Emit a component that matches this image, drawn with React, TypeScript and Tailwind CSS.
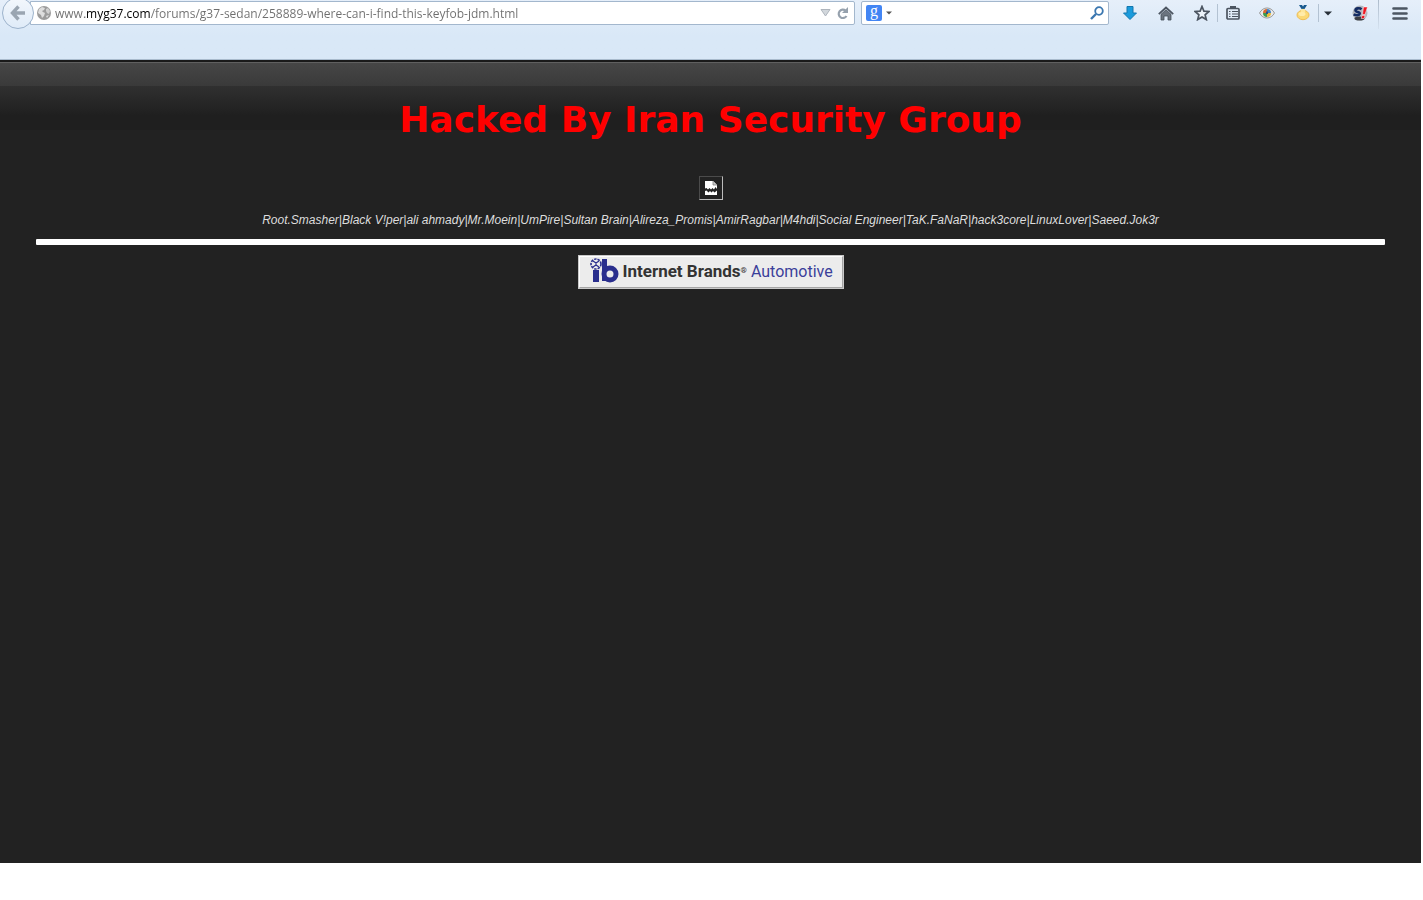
import type { ReactNode } from "react";

const members = [
  "Root.Smasher",
  "Black V!per",
  "ali ahmady",
  "Mr.Moein",
  "UmPire",
  "Sultan Brain",
  "Alireza_Promis",
  "AmirRagbar",
  "M4hdi",
  "Social Engineer",
  "TaK.FaNaR",
  "hack3core",
  "LinuxLover",
  "Saeed.Jok3r",
];

function ToolButton({ label, children }: { label: string; children: ReactNode }) {
  return (
    <button type="button" aria-label={label} className="flex h-6 w-[30px] items-center justify-center">
      {children}
    </button>
  );
}

function Separator() {
  return <span className="h-[18px] w-px bg-[#b3c2d2]" aria-hidden="true" />;
}

function BackButton() {
  return (
    <button
      type="button"
      aria-label="Back"
      className="relative z-10 -mr-1 flex size-8 shrink-0 items-center justify-center rounded-full border border-[#9db3cc] bg-gradient-to-b from-[#f3f7fc] to-[#dfebf8]"
    >
      <svg width="16" height="16" viewBox="0 0 16 16" fill="none" stroke="#9aa5b1" strokeWidth="3.400">
        <path d="M8.5 1.5 2.5 8l6 6.500M3 8h12" />
      </svg>
    </button>
  );
}

function AddressBar() {
  return (
    <div className="flex h-6 min-w-0 flex-1 items-center rounded-r-[2px] border border-[#a3b7cd] bg-white pl-1.5">
      <svg width="14" height="14" viewBox="0 0 14 14" className="shrink-0" aria-hidden="true">
        <circle cx="7" cy="7" r="7" fill="#9c9c9c" />
        <path d="M2 3 5 1l3 1-1 2-2 1 1 1 2 1-1 3-2 2-1-3-3-2z" fill="#dedede" />
        <path d="m9 3 2-1 2 3-1 3-2-1-1-2z" fill="#d0d0d0" />
        <path d="m9 10 3-1-2 3z" fill="#ddd" />
      </svg>
      {/* The host part of the address is drawn darker than the rest */}
      <input
        type="text"
        aria-label="Address"
        defaultValue="www.myg37.com/forums/g37-sedan/258889-where-can-i-find-this-keyfob-jdm.html"
        className="ml-1 h-5 min-w-0 flex-1 bg-[linear-gradient(90deg,#6e6e6e_30px,#000_30px,#000_95px,#6e6e6e_95px)] bg-clip-text font-['Open_Sans','Noto_Sans',sans-serif] text-xs text-transparent caret-black outline-none"
      />
      <button type="button" aria-label="Show history" className="flex w-[18px] justify-center">
        <svg width="11" height="8" viewBox="0 0 11 8">
          <path d="M1 .5h9L5.500 7z" fill="#d2d7dc" stroke="#aeb5bd" />
        </svg>
      </button>
      <button type="button" aria-label="Reload" className="flex w-5 justify-center pr-1">
        <svg width="13" height="13" viewBox="0 0 13 13">
          <path d="M9.500 3.500A4.200 4.200 0 1 0 10.500 9" fill="none" stroke="#96a1ad" strokeWidth="2.200" />
          <path d="M12 0v6H6z" fill="#96a1ad" />
        </svg>
      </button>
    </div>
  );
}

function SearchBar() {
  return (
    <div className="ml-1.5 flex h-6 w-[248px] shrink-0 items-center rounded-[2px] border border-[#a3b7cd] bg-white px-1">
      <button type="button" aria-label="Choose search engine" className="flex items-center gap-1">
        <span className="flex size-4 items-center justify-center rounded-[2px] bg-[#4285f4] pb-1 font-['Liberation_Serif',serif] text-base leading-none text-white">
          g
        </span>
        <svg width="6" height="4" viewBox="0 0 6 4">
          <path d="M0 .5h6L3 3.500z" fill="#555" />
        </svg>
      </button>
      <input
        type="text"
        aria-label="Search"
        className="ml-1 h-5 min-w-0 flex-1 font-['Open_Sans',sans-serif] text-xs outline-none"
      />
      <button type="button" aria-label="Go">
        <svg width="14" height="14" viewBox="0 0 14 14" fill="none" stroke="#3b77b0">
          <circle cx="9" cy="5" r="3.800" strokeWidth="1.800" />
          <path d="M6 8 1 13" strokeWidth="2.400" />
        </svg>
      </button>
    </div>
  );
}

function BrowserActions() {
  return (
    <div className="ml-1.5 flex shrink-0 items-center">
      <div className="flex items-center gap-1.5">
        <ToolButton label="Downloads">
          <svg width="14" height="14" viewBox="0 0 14 14">
            <path d="M4 .5h6V7h3.500L7 13.500.5 7H4z" fill="#1b9bdc" stroke="#1377ae" />
          </svg>
        </ToolButton>
        <ToolButton label="Home">
          <svg width="16" height="15" viewBox="0 0 16 15">
            <path d="M.8 8.200 8 1.500l7.200 6.700" fill="none" stroke="#4c5561" strokeWidth="1.800" />
            <path d="M3 8.300 8 3.800l5 4.500V14h-3v-4H6v4H3z" fill="#6b747f" stroke="#454e59" strokeWidth=".8" />
          </svg>
        </ToolButton>
        <ToolButton label="Bookmark this page">
          <svg width="16" height="16" viewBox="0 0 16 16">
            <path
              d="m8 1.500 1.900 4.600 5 .4-3.800 3.300 1.200 4.800L8 12l-4.300 2.600 1.200-4.800L1.100 6.500l5-.4z"
              fill="#edf3fa"
              stroke="#4c5561"
              strokeWidth="1.700"
            />
          </svg>
        </ToolButton>
      </div>
      <Separator />
      <ToolButton label="Bookmarks">
        <svg width="14" height="14" viewBox="0 0 14 14" fill="none" stroke="#4c5561">
          <rect x="1" y="2.500" width="12" height="10.500" rx="1" strokeWidth="1.700" />
          <path d="M4 1.500h6" strokeWidth="3" />
          <path d="M3 5.500h1.500M6 5.500h6M3 8h1.500M6 8h6M3 10.500h1.500M6 10.500h6" />
        </svg>
      </ToolButton>
      <div className="ml-1 flex items-center gap-1.5">
        <ToolButton label="View">
          <svg width="16" height="12" viewBox="0 0 16 12">
            <path d="M.5 6C4-.7 12-.7 15.500 6 12 12.700 4 12.700.5 6z" fill="#e9e9e9" stroke="#9a9a9a" />
            <path d="M8 2a4 4 0 0 0-4 4h4z" fill="#d96b32" />
            <path d="M8 2a4 4 0 0 1 4 4H8z" fill="#3f83c8" />
            <path d="M4 6a4 4 0 0 0 4 4V6z" fill="#3f9a4c" />
            <path d="M12 6a4 4 0 0 1-4 4V6z" fill="#eab936" />
            <path d="M7 4.500h2v2.500H7z" fill="#2d4f86" />
          </svg>
        </ToolButton>
        <ToolButton label="Awards">
          <svg width="14" height="16" viewBox="0 0 14 16">
            <path d="M3 0h3l1 1.500L8 0h3L8.500 4h-3z" fill="#17598e" />
            <ellipse cx="7" cy="10" rx="6" ry="4.700" fill="#fbd874" stroke="#eebd55" />
            <circle cx="7" cy="6" r="2.300" fill="#fde69b" />
            <ellipse cx="6" cy="9" rx="3.500" ry="2" fill="#ffebaa" />
          </svg>
        </ToolButton>
      </div>
      <Separator />
      <button type="button" aria-label="More" className="flex h-6 w-[18px] items-center justify-center">
        <svg width="8" height="5" viewBox="0 0 8 5">
          <path d="M0 .5h8l-4 4z" fill="#272f38" />
        </svg>
      </button>
      <span className="ml-2 flex">
        <ToolButton label="Status">
          <svg width="16" height="16" viewBox="0 0 16 16">
            <circle cx="8" cy="8" r="7.500" fill="#b4b8be" />
            <ellipse cx="7.500" cy="13.500" rx="5" ry="2" fill="#3c3f45" />
            <path
              d="M9.500 4.300C8 2.800 3.500 3 3.500 5.300c0 2.300 4.500 1.300 4.200 3.500-.4 1.900-4 1.900-6 .4"
              fill="none"
              stroke="#142c63"
              strokeWidth="2.600"
            />
            <path d="M11.500 2h4l-2.500 7.500h-2.500zM10 10.500h3l-.8 3h-3z" fill="#ee1520" stroke="#fff" strokeWidth=".5" />
          </svg>
        </ToolButton>
      </span>
      <span className="ml-[3px] h-8 w-px bg-gradient-to-b from-[#a9b8c8] to-[#d5e2f0]" aria-hidden="true" />
      <span className="mx-1.5 flex">
        <ToolButton label="Open menu">
          <svg width="16" height="13" viewBox="0 0 16 13" stroke="#4c5662" strokeWidth="2.600" strokeLinecap="round">
            <path d="M1.500 1.500h13M1.500 6.500h13M1.500 11.500h13" />
          </svg>
        </ToolButton>
      </span>
    </div>
  );
}

function BrokenImage() {
  return (
    <div
      role="img"
      aria-label="Missing picture"
      className="flex size-6 items-center justify-center border border-t-[#4b4b4b] border-r-[#bbb] border-b-[#bbb] border-l-[#4b4b4b]"
    >
      <svg width="12" height="14" viewBox="0 0 12 14">
        <path d="M0 0h8l4 4v4l-1.500-2L9 8.500 7.500 7 6 8.500 4.500 7 3 8.500 1.500 7 0 7.500z" fill="#fff" />
        <path d="M8 0v4h4" fill="#ccc" stroke="#777" strokeWidth=".7" />
        <path d="m0 10 1.500-.5 2 2 1.500-1.500 1.500 1.500L8 10l1.500 1.500L12 9.500V14H0z" fill="#fff" />
      </svg>
    </div>
  );
}

function BrandBanner() {
  return (
    <a
      href="#"
      className="flex h-[34px] w-[266px] items-center border-2 border-t-white border-r-[#a5a5a5] border-b-[#a5a5a5] border-l-white bg-[#ececec] pl-2.5 font-[Roboto,'Liberation_Sans',sans-serif] whitespace-nowrap outline outline-1 -outline-offset-1 outline-[#c9c9c9]"
    >
      <svg width="29" height="25" viewBox="0 0 29 25" className="mb-1 shrink-0" aria-hidden="true">
        <path d="M3 12h6v12H3z" fill="#292e8d" />
        <circle cx="6" cy="6" r="5" fill="#ececec" stroke="#292e8d" strokeWidth="1.600" strokeDasharray="2.500 1" />
        <path d="m3 3 3 2 3-2M3 9l3-2 3 2M6 5v3" fill="none" stroke="#292e8d" strokeWidth="1.300" />
        <path d="M12 1h5v22h-5z" fill="#292e8d" />
        <circle cx="20" cy="16" r="6" fill="#ececec" stroke="#292e8d" strokeWidth="5" />
      </svg>
      <span className="ml-1 text-[17px] font-bold text-[#333]">Internet Brands</span>
      <span className="self-start pt-2 text-[8px] font-bold text-[#333]">®</span>
      <span className="ml-1 text-base text-[#3b3f9a]">Automotive</span>
    </a>
  );
}

export default function App() {
  return (
    <div className="flex min-h-screen flex-col bg-white pr-0.5 pb-[37px]">
      <header className="h-[60px] overflow-hidden border-b border-[#a9bbcd] bg-gradient-to-b from-[#e6effa] to-[#d9e8f7] to-60%">
        <div className="-mt-[3px] flex h-8 items-center pl-0.5">
          <BackButton />
          <AddressBar />
          <SearchBar />
          <BrowserActions />
        </div>
      </header>

      <main className="flex flex-1 flex-col items-center border-t-2 border-[#1a1a1a] bg-[#222]">
        {/* Glossy strip and its fade sit behind the heading */}
        <div className="flex w-full flex-col items-center bg-[linear-gradient(#606060_1px,#464646_1px,#3a3a3a_24px,#303030_24px,#1f1f1f_54px,#1f1f1f_68px,#222_68px)]">
          <h1 className="pt-9 text-center font-['DejaVu_Sans',Verdana,sans-serif] text-4xl leading-[44px] font-bold text-[#f00]">
            Hacked By Iran Security Group
          </h1>
          <div className="mt-[34px]">
            <BrokenImage />
          </div>
        </div>
        <p className="mt-2.5 text-center font-['Liberation_Sans',Arial,sans-serif] text-xs leading-5 text-[#ddd] italic">
          {members.join("|")}
        </p>
        <hr className="mt-[9px] h-1.5 w-[95%] rounded-[1px] border-0 bg-white" />
        <div className="mt-2.5">
          <BrandBanner />
        </div>
      </main>
    </div>
  );
}
